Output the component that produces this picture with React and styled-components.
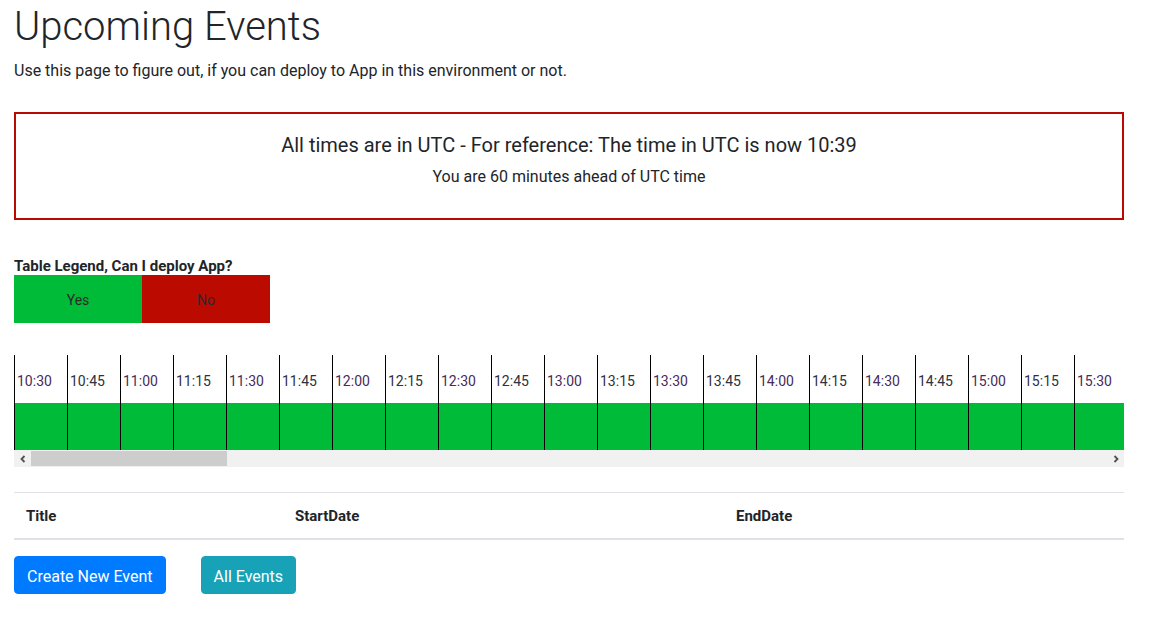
import React from 'react';
import styled, { createGlobalStyle } from 'styled-components';

const GlobalStyle = createGlobalStyle`
    * { box-sizing: border-box; }
    body {
        margin: 0;
        background: #fff;
        color: #212529;
        font-family: Roboto, "Noto Sans", "Liberation Sans", sans-serif;
        font-size: 16px;
        line-height: 1.5;
    }
`;

const Page = styled.div`
    width: 1110px;
    margin-left: 14px;
`;

const Title = styled.h1`
    margin: 0 0 8px;
    padding-top: 3px;
    font-size: 40px;
    font-weight: 300;
    line-height: 1.2;
`;

const Lead = styled.p`
    margin: 0 0 29px;
`;

const UtcBox = styled.div`
    border: 2px solid #b80a00;
    padding: 19px 16px 13px;
    text-align: center;
    margin-bottom: 37px;
`;

const UtcTitle = styled.h5`
    margin: 0 0 8px;
    font-size: 20px;
    font-weight: 400;
    line-height: 1.2;
`;

const UtcNote = styled.p`
    margin: 0 0 16px;
`;

const LegendLabel = styled.div`
    font-size: 15px;
    font-weight: 700;
    line-height: 18px;
`;

const Legend = styled.div`
    display: flex;
    margin-bottom: 32px;
`;

const LegendCell = styled.div`
    width: 128px;
    height: 48px;
    padding-top: 3px;
    display: flex;
    align-items: center;
    justify-content: center;
    font-size: 14px;
    color: #2a2a2a;
    background: ${p => (p.$ok ? '#00bb37' : '#bb0a00')};
`;

const Timeline = styled.div`
    width: 100%;
    overflow: hidden;
`;

const Slots = styled.div`
    display: flex;
    width: max-content;
`;

const Slot = styled.div`
    width: 53px;
    flex: none;
    border-left: 1px solid #000;
    display: grid;
    grid-template-rows: 48px 47px;
`;

const SlotLabel = styled.div`
    display: flex;
    align-items: center;
    padding: 4px 0 0 2px;
    font-size: 14px;
    color: ${p => (p.$alt ? '#4a2a5a' : '#303040')};
`;

const SlotBar = styled.div`
    background: ${p => (p.$ok ? '#00bb37' : '#bb0a00')};
`;

const ScrollBar = styled.div`
    display: flex;
    height: 17px;
    background: #f1f1f1;
    margin-bottom: 25px;
`;

const ScrollButton = styled.div`
    width: 17px;
    flex: none;
    display: flex;
    align-items: center;
    justify-content: center;
`;

const ScrollTrack = styled.div`
    flex: 1;
    display: flex;
    align-items: center;
`;

const ScrollThumb = styled.div`
    width: 196px;
    height: 15px;
    background: #cdcdcd;
`;

const Table = styled.div`
    display: grid;
    grid-template-columns: 269px 441px 1fr;
    border-top: 1px solid #dee2e6;
    border-bottom: 2px solid #dee2e6;
    margin-bottom: 16px;
`;

const HeadCell = styled.div`
    padding: 12px 12px 11px;
    font-size: 15px;
    font-weight: 700;
    line-height: 22px;
`;

const Actions = styled.div`
    display: flex;
    gap: 35px;
`;

const Button = styled.button`
    height: 38px;
    padding: 3px 12px 0;
    border: 1px solid ${p => p.$color};
    border-radius: 4px;
    background: ${p => p.$color};
    color: #fff;
    font-family: inherit;
    font-size: 16px;
    line-height: 24px;
    cursor: pointer;
`;

const Chevron = ({ dir }) => (
    <svg width="8" height="8" viewBox="0 0 8 8">
        <path
            d={dir === 'left' ? 'M5.5 1 L2.5 4 L5.5 7' : 'M2.5 1 L5.5 4 L2.5 7'}
            fill="none"
            stroke="#505050"
            strokeWidth="1.8"
        />
    </svg>
);

// only the slots that fit in the visible strip
function buildSlots() {
    const slots = [];
    let minutes = 10 * 60 + 30;
    for (let i = 0; i < 21; i++) {
        const h = Math.floor(minutes / 60) % 24;
        const m = minutes % 60;
        slots.push({
            label: `${String(h).padStart(2, '0')}:${String(m).padStart(2, '0')}`,
            alt: i % 2 === 0,
            ok: true,
        });
        minutes += 15;
    }
    return slots;
}

export default function App() {
    const slots = buildSlots();

    return (
        <Page>
            <GlobalStyle />
            <Title>Upcoming Events</Title>
            <Lead>Use this page to figure out, if you can deploy to App in this environment or not.</Lead>

            <UtcBox>
                <UtcTitle>All times are in UTC - For reference: The time in UTC is now 10:39</UtcTitle>
                <UtcNote>You are 60 minutes ahead of UTC time</UtcNote>
            </UtcBox>

            <LegendLabel>Table Legend, Can I deploy App?</LegendLabel>
            <Legend>
                <LegendCell $ok>Yes</LegendCell>
                <LegendCell>No</LegendCell>
            </Legend>

            <Timeline>
                <Slots>
                    {slots.map(s => (
                        <Slot key={s.label}>
                            <SlotLabel $alt={s.alt}>{s.label}</SlotLabel>
                            <SlotBar $ok={s.ok} />
                        </Slot>
                    ))}
                </Slots>
            </Timeline>
            <ScrollBar>
                <ScrollButton><Chevron dir="left" /></ScrollButton>
                <ScrollTrack><ScrollThumb /></ScrollTrack>
                <ScrollButton><Chevron dir="right" /></ScrollButton>
            </ScrollBar>

            <Table>
                <HeadCell>Title</HeadCell>
                <HeadCell>StartDate</HeadCell>
                <HeadCell>EndDate</HeadCell>
            </Table>

            <Actions>
                <Button $color="#007bff">Create New Event</Button>
                <Button $color="#17a2b8">All Events</Button>
            </Actions>
        </Page>
    );
}
